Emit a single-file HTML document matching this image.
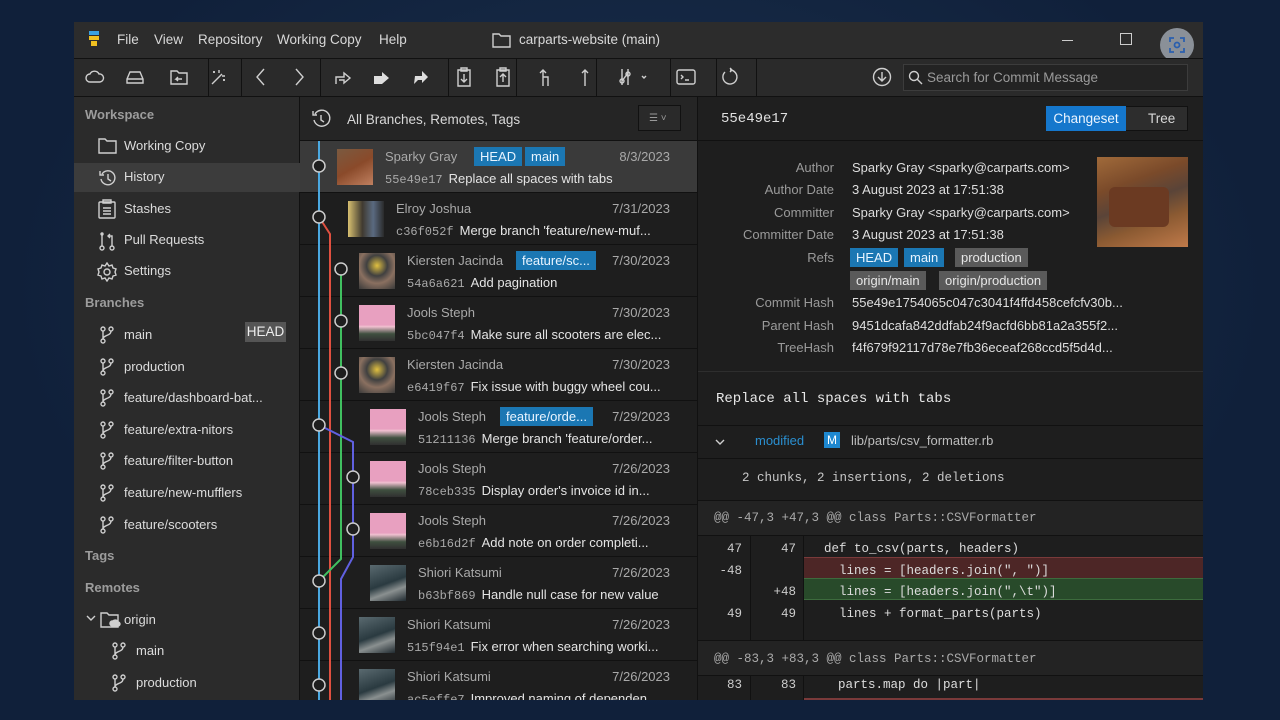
<!DOCTYPE html><html><head><meta charset="utf-8"><style>
*{margin:0;padding:0;box-sizing:border-box}
body{width:1280px;height:720px;overflow:hidden;background:radial-gradient(ellipse at 50% 40%,#1b3250,#10203a 70%);font-family:"Liberation Sans",sans-serif;color:#d8d8d8;font-size:13px;position:relative}
.a{position:absolute;white-space:nowrap}
.win{position:absolute;left:74px;top:22px;width:1129px;height:678px;background:#1e1e1e;overflow:hidden}
.mono{font-family:"Liberation Mono",monospace}
.tag{position:absolute;background:#1b77b3;color:#e8f4ff;padding:0 6px;height:19px;line-height:19px;font-size:13px}
.gtag{background:#5a5a5a;color:#e6e6e6}
.sep{position:absolute;background:#111;height:1px}
.row{position:absolute;left:226px;width:397px;height:52px;border-bottom:1px solid #111}
.av{position:absolute;width:36px;height:36px}
.nm{position:absolute;color:#a9a9a9;font-size:13px}
.dt{position:absolute;right:27px;color:#a9a9a9}
.msg{position:absolute;color:#e4e4e4}
.hs{color:#a9a9a9;font-family:"Liberation Mono",monospace;font-size:12px;margin-right:6px}
.lbl{position:absolute;right:369px;color:#9a9a9a;text-align:right}
.val{position:absolute;left:778px;color:#dedede}
.si{position:absolute;left:50px;color:#dcdcdc}
.sh{position:absolute;left:11px;color:#9c9c9c;font-weight:bold}
.ic{position:absolute;stroke:#cfcfcf;fill:none;stroke-width:1.4}
</style></head><body>
<div class="win">
<div class="a" style="left:0;top:0;width:1129px;height:36px;background:#2c2c2c"></div>
<div class="a" style="left:15px;top:9px;width:10px;height:4px;background:#3aa0e0"></div>
<div class="a" style="left:15px;top:14px;width:10px;height:4px;background:#f0c020"></div>
<div class="a" style="left:17px;top:19px;width:6px;height:5px;background:#f0c020"></div>
<div class="a" style="left:43px;top:10px;font-size:13.5px">File</div>
<div class="a" style="left:80px;top:10px;font-size:13.5px">View</div>
<div class="a" style="left:124px;top:10px;font-size:13.5px">Repository</div>
<div class="a" style="left:203px;top:10px;font-size:13.5px">Working Copy</div>
<div class="a" style="left:305px;top:10px;font-size:13.5px">Help</div>
<svg class="ic" style="left:418px;top:9px" width="20" height="18"><path d="M1 3h6l2 2h9v11H1z"/></svg>
<div class="a" style="left:445px;top:10px;font-size:13.5px">carparts-website (main)</div>
<div class="a" style="left:988px;top:18px;width:11px;height:1px;background:#ccc"></div>
<div class="a" style="left:1046px;top:11px;width:12px;height:12px;border:1px solid #ccc"></div>
<div class="a" style="left:1086px;top:6px;width:34px;height:34px;border-radius:17px;background:#8a9098"></div>
<svg class="a" style="left:1093px;top:13px" width="20" height="20" stroke="#2a5fae" fill="none" stroke-width="1.8"><path d="M3 7V3h4M13 3h4v4M17 13v4h-4M7 17H3v-4"/><circle cx="10" cy="10" r="2.5"/></svg>
<div class="a" style="left:0;top:36px;width:1129px;height:39px;background:#2a2a2a;border-top:1px solid #111;border-bottom:1px solid #111"></div>
<div class="a" style="left:134px;top:37px;width:1px;height:37px;background:#111"></div>
<div class="a" style="left:167px;top:37px;width:1px;height:37px;background:#111"></div>
<div class="a" style="left:246px;top:37px;width:1px;height:37px;background:#111"></div>
<div class="a" style="left:374px;top:37px;width:1px;height:37px;background:#111"></div>
<div class="a" style="left:442px;top:37px;width:1px;height:37px;background:#111"></div>
<div class="a" style="left:522px;top:37px;width:1px;height:37px;background:#111"></div>
<div class="a" style="left:596px;top:37px;width:1px;height:37px;background:#111"></div>
<div class="a" style="left:642px;top:37px;width:1px;height:37px;background:#111"></div>
<div class="a" style="left:682px;top:37px;width:1px;height:37px;background:#111"></div>
<svg class="ic" style="left:11px;top:47px" width="20" height="16"><path d="M5 13a4 4 0 0 1 0-8 5 5 0 0 1 9 0 4 4 0 0 1 1 8z"/></svg>
<svg class="ic" style="left:51px;top:47px" width="20" height="16"><path d="M2 10l3-7h10l3 7v4H2zM2 10h16"/></svg>
<svg class="ic" style="left:95px;top:46px" width="20" height="18"><path d="M2 3h6l2 2h8v11H2z M13 11H7l2-2M7 11l2 2"/></svg>
<svg class="ic" style="left:134px;top:46px" width="20" height="18"><path d="M4 16L14 6M11 2v3M14 8h3M6 3v2M5 4h2M16 11v2M15 12h2"/></svg>
<svg class="ic" style="left:180px;top:45px" width="14" height="20" stroke-width="1.8"><path d="M10 2L3 10l7 8"/></svg>
<svg class="ic" style="left:218px;top:45px" width="14" height="20" stroke-width="1.8" stroke="#999"><path d="M4 2l7 8-7 8"/></svg>
<svg class="ic" style="left:259px;top:46px" width="20" height="18"><path d="M3 16V9h8V5l6 5-6 5v-3H6"/></svg>
<svg class="a" style="left:298px;top:46px" width="20" height="18" fill="#ddd"><path d="M2 16V8h8V4l7 6-7 6"/></svg>
<svg class="a" style="left:337px;top:46px" width="20" height="18" fill="#ddd"><path d="M3 16l1-8h7V3l6 6-6 6v-3H7z"/></svg>
<svg class="ic" style="left:382px;top:45px" width="16" height="20"><path d="M2 3h12v16H2zM5 1h6v3H5zM8 7v8M5 12l3 3 3-3"/></svg>
<svg class="ic" style="left:421px;top:45px" width="16" height="20" stroke="#999"><path d="M2 3h12v16H2zM5 1h6v3H5zM8 15V7M5 10l3-3 3 3"/></svg>
<svg class="ic" style="left:464px;top:45px" width="14" height="20" stroke-width="1.8"><path d="M5 19V3M2 6l3-3 3 3M5 10h5v9"/></svg>
<svg class="ic" style="left:504px;top:45px" width="14" height="20" stroke-width="1.8"><path d="M7 19V3M4 6l3-3 3 3"/></svg>
<svg class="ic" style="left:544px;top:45px" width="30" height="20"><path d="M4 2v16M10 2v16M4 14l6-8"/><circle cx="4" cy="14" r="2"/><circle cx="10" cy="7" r="2"/><path d="M24 9l2 2 2-2"/></svg>
<svg class="ic" style="left:602px;top:46px" width="20" height="18"><rect x="1" y="2" width="18" height="14" rx="2"/><path d="M5 7l2 2-2 2M9 12h4"/></svg>
<svg class="ic" style="left:645px;top:45px" width="20" height="20" stroke-width="1.6"><path d="M6 5a7 7 0 1 0 5-2M11 1l2 2-2 2"/></svg>
<svg class="ic" style="left:798px;top:45px" width="20" height="20"><circle cx="10" cy="10" r="8.5"/><path d="M10 5v9M6 10l4 4 4-4"/></svg>
<div class="a" style="left:829px;top:42px;width:285px;height:27px;background:#232323;border:1px solid #3c3c3c"></div>
<svg class="ic" style="left:834px;top:48px" width="16" height="16" stroke="#aaa"><circle cx="6" cy="6" r="4.5"/><path d="M9 9l5 5"/></svg>
<div class="a" style="left:853px;top:48px;color:#9a9a9a;font-size:13.5px">Search for Commit Message</div>
<div class="a" style="left:0;top:75px;width:226px;height:603px;background:#2b2b2b;border-right:1px solid #111"></div>
<div class="a" style="left:0;top:141px;width:226px;height:29px;background:#3c3c3c"></div>
<div class="sh a" style="top:85px">Workspace</div>
<svg class="ic" style="left:24px;top:115px" width="20" height="18"><path d="M1 2h6l2 2h9v12H1z"/></svg><div class="si" style="top:116px">Working Copy</div>
<svg class="ic" style="left:24px;top:146px" width="20" height="20"><path d="M4 6a7 7 0 1 1-1 5M2 3v4h4M10 6v5l3 2"/></svg><div class="si" style="top:147px">History</div>
<svg class="ic" style="left:24px;top:177px" width="18" height="20"><rect x="1" y="3" width="16" height="16" rx="1"/><path d="M5 1h8v3H5zM5 9h8M5 12h8M5 15h8"/></svg><div class="si" style="top:179px">Stashes</div>
<svg class="ic" style="left:24px;top:209px" width="18" height="20"><circle cx="4" cy="17" r="2"/><circle cx="14" cy="17" r="2"/><path d="M4 2v13M14 15V5h-4M12 3l-2 2 2 2"/><circle cx="4" cy="3" r="1"/></svg><div class="si" style="top:210px">Pull Requests</div>
<svg class="ic" style="left:23px;top:240px" width="20" height="20"><circle cx="10" cy="10" r="3"/><path d="M10 1l2 3 3-1 1 3 3 1-1 3 1 3-3 1-1 3-3-1-2 3-2-3-3 1-1-3-3-1 1-3-1-3 3-1 1-3 3 1z"/></svg><div class="si" style="top:241px">Settings</div>
<div class="sh a" style="top:273px">Branches</div>
<div class="a" style="left:171px;top:300px;width:41px;height:20px;background:#555;color:#eee;text-align:center;line-height:20px;font-size:13.5px">HEAD</div>
<div id="br"></div>
<div class="sh a" style="top:526px">Tags</div>
<div class="sh a" style="top:558px">Remotes</div>
<svg class="ic" style="left:12px;top:592px" width="10" height="8"><path d="M1 2l4 4 4-4"/></svg>
<svg class="ic" style="left:26px;top:589px" width="22" height="18"><path d="M1 2h6l2 2h9v12H1z"/><path d="M12 15a2.5 2.5 0 0 1 1-5 3 3 0 0 1 5 1 2 2 0 0 1 0 4z" fill="#cfcfcf"/></svg>
<div class="si" style="top:590px">origin</div>
<div class="a" style="left:226px;top:75px;width:397px;height:44px;background:#252525;border-bottom:1px solid #111"></div>
<svg class="ic" style="left:236px;top:86px" width="22" height="22"><path d="M5 6a8 8 0 1 1-1 6M3 3v4h4M11 7v5l3 2"/></svg>
<div class="a" style="left:273px;top:90px;font-size:13.5px">All Branches, Remotes, Tags</div>
<div class="a" style="left:564px;top:83px;width:43px;height:26px;border:1px solid #111;background:#2a2a2a"></div>
<div class="a" style="left:575px;top:91px;color:#999;font-size:10px">☰ ˅</div>
<div class="a" style="left:623px;top:75px;width:1px;height:603px;background:#111"></div>
<div id="rows"></div>
<div class="a" style="left:624px;top:75px;width:505px;height:44px;background:#1f1f1f;border-bottom:1px solid #111"></div>
<div class="a mono" style="left:647px;top:89px;font-size:14px;color:#e0e0e0">55e49e17</div>
<div class="a" style="left:972px;top:84px;width:142px;height:25px;border:1px solid #111;background:#2d2d2d"></div>
<div class="a" style="left:972px;top:84px;width:80px;height:25px;background:#1577cc;color:#eaf4ff;text-align:center;line-height:25px;font-size:13.5px">Changeset</div>
<div class="a" style="left:1074px;top:89px;font-size:13.5px">Tree</div>
<div class="lbl a" style="top:138px">Author</div><div class="val" style="top:138px">Sparky Gray &lt;sparky@carparts.com&gt;</div>
<div class="lbl a" style="top:160px">Author Date</div><div class="val" style="top:160px">3 August 2023 at 17:51:38</div>
<div class="lbl a" style="top:183px">Committer</div><div class="val" style="top:183px">Sparky Gray &lt;sparky@carparts.com&gt;</div>
<div class="lbl a" style="top:205px">Committer Date</div><div class="val" style="top:205px">3 August 2023 at 17:51:38</div>
<div class="lbl a" style="top:228px">Refs</div>
<div class="tag" style="left:776px;top:226px">HEAD</div><div class="tag" style="left:830px;top:226px">main</div><div class="tag gtag" style="left:881px;top:226px">production</div>
<div class="tag gtag" style="left:776px;top:249px">origin/main</div><div class="tag gtag" style="left:865px;top:249px">origin/production</div>
<div class="lbl a" style="top:273px">Commit Hash</div><div class="val" style="top:273px">55e49e1754065c047c3041f4ffd458cefcfv30b...</div>
<div class="lbl a" style="top:296px">Parent Hash</div><div class="val" style="top:296px">9451dcafa842ddfab24f9acfd6bb81a2a355f2...</div>
<div class="lbl a" style="top:318px">TreeHash</div><div class="val" style="top:318px">f4f679f92117d78e7fb36eceaf268ccd5f5d4d...</div>
<div class="a" style="left:1023px;top:135px;width:91px;height:90px;background:linear-gradient(160deg,#a06a3a 0%,#7a4a2a 30%,#5a4438 50%,#8b5a32 70%,#c07a4a 100%)"></div>
<div class="a" style="left:1035px;top:165px;width:60px;height:40px;background:#6b3a22;border-radius:6px"></div>
<div class="sep" style="left:624px;top:349px;width:505px;background:#2e2e2e"></div>
<div class="a mono" style="left:642px;top:369px;font-size:14px;color:#e8e8e8">Replace all spaces with tabs</div>
<div class="sep" style="left:624px;top:403px;width:505px"></div>
<svg class="ic" style="left:641px;top:416px" width="10" height="8" stroke="#888"><path d="M1 2l4 4 4-4"/></svg>
<div class="a" style="left:681px;top:411px;color:#2a8fd0">modified</div>
<div class="a" style="left:750px;top:410px;width:16px;height:16px;background:#1e88d0;color:#fff;font-size:12px;text-align:center;line-height:16px">M</div>
<div class="a" style="left:777px;top:411px;color:#bdbdbd">lib/parts/csv_formatter.rb</div>
<div class="sep" style="left:624px;top:436px;width:505px"></div>
<div class="a mono" style="left:668px;top:449px;font-size:12.5px;color:#c8c8c8">2 chunks, 2 insertions, 2 deletions</div>
<div class="sep" style="left:624px;top:478px;width:505px"></div>
<div class="a" style="left:624px;top:479px;width:505px;height:34px;background:#232323"></div>
<div class="a mono" style="left:640px;top:489px;font-size:12.5px;color:#aaa">@@ -47,3 +47,3 @@ class Parts::CSVFormatter</div>
<div class="sep" style="left:624px;top:513px;width:505px"></div>
<div class="a" style="left:676px;top:514px;width:1px;height:104px;background:#111"></div>
<div class="a" style="left:729px;top:514px;width:1px;height:104px;background:#111"></div>
<div class="a" style="left:730px;top:535px;width:399px;height:21px;background:#4d2626;border-top:1px solid #7a3a3a"></div>
<div class="a" style="left:730px;top:556px;width:399px;height:22px;background:#284a2a;border-top:1px solid #3d6b3d;border-bottom:1px solid #3d6b3d"></div>
<div class="a mono" style="left:624px;top:517px;width:44px;text-align:right;font-size:12.5px;line-height:21.5px;color:#ccc">47<br>-48<br>&nbsp;<br>49</div>
<div class="a mono" style="left:676px;top:517px;width:46px;text-align:right;font-size:12.5px;line-height:21.5px;color:#ccc">47<br>&nbsp;<br>+48<br>49</div>
<div class="a mono" style="left:750px;top:517px;font-size:12.5px;line-height:21.5px;color:#ddd;white-space:pre">def to_csv(parts, headers)
  lines = [headers.join(", ")]
  lines = [headers.join(",\t")]
  lines + format_parts(parts)</div>
<div class="sep" style="left:624px;top:618px;width:505px"></div>
<div class="a" style="left:624px;top:619px;width:505px;height:34px;background:#232323"></div>
<div class="a mono" style="left:640px;top:630px;font-size:12.5px;color:#aaa">@@ -83,3 +83,3 @@ class Parts::CSVFormatter</div>
<div class="sep" style="left:624px;top:653px;width:505px"></div>
<div class="a" style="left:676px;top:654px;width:1px;height:24px;background:#111"></div>
<div class="a" style="left:729px;top:654px;width:1px;height:24px;background:#111"></div>
<div class="a mono" style="left:624px;top:656px;width:44px;text-align:right;font-size:12.5px;color:#ccc">83</div>
<div class="a mono" style="left:676px;top:656px;width:46px;text-align:right;font-size:12.5px;color:#ccc">83</div>
<div class="a mono" style="left:764px;top:656px;font-size:12.5px;color:#ddd">parts.map do |part|</div>
<div class="a" style="left:730px;top:676px;width:399px;height:2px;background:#7a3a3a"></div>
</div>
<script>
var br=["main","production","feature/dashboard-bat...","feature/extra-nitors","feature/filter-button","feature/new-mufflers","feature/scooters"],h="";
var bic=function(x,y){return '<svg class="ic" style="left:'+x+'px;top:'+y+'px" width="16" height="20"><circle cx="4" cy="4" r="2"/><circle cx="12" cy="4" r="2"/><circle cx="4" cy="16" r="2"/><path d="M4 6v8M12 6c0 5-8 4-8 8"/></svg>';};
br.forEach(function(b,i){var y=303+i*31.6;h+=bic(25,y)+'<div class="si" style="top:'+(y+2)+'px">'+b+'</div>';});
[["main",619],["production",651]].forEach(function(b){h+=bic(37,b[1])+'<div class="si" style="left:62px;top:'+(b[1]+2)+'px">'+b[0]+'</div>';});
document.getElementById("br").outerHTML=h;
var R=[["Sparky Gray","8/3/2023","55e49e17","Replace all spaces with tabs",337,[["HEAD",89],["main",140]],"c"],
["Elroy Joshua","7/31/2023","c36f052f","Merge branch 'feature/new-muf...",348,[],"e"],
["Kiersten Jacinda","7/30/2023","54a6a621","Add pagination",359,[["feature/sc...",109]],"k"],
["Jools Steph","7/30/2023","5bc047f4","Make sure all scooters are elec...",359,[],"j"],
["Kiersten Jacinda","7/30/2023","e6419f67","Fix issue with buggy wheel cou...",359,[],"k"],
["Jools Steph","7/29/2023","51211136","Merge branch 'feature/order...",370,[["feature/orde...",82]],"j"],
["Jools Steph","7/26/2023","78ceb335","Display order's invoice id in...",370,[],"j"],
["Jools Steph","7/26/2023","e6b16d2f","Add note on order completi...",370,[],"j"],
["Shiori Katsumi","7/26/2023","b63bf869","Handle null case for new value",370,[],"s"],
["Shiori Katsumi","7/26/2023","515f94e1","Fix error when searching worki...",359,[],"s"],
["Shiori Katsumi","7/26/2023","ac5effe7","Improved naming of dependen...",359,[],"s"]];
var G={c:"linear-gradient(150deg,#7a5a40,#8a4a2a 50%,#c08060)",e:"linear-gradient(90deg,#d8c070,#403a30 40%,#5a6a80 70%,#2a2a2a)",k:"radial-gradient(circle at 50% 35%,#e0c040 0,#404040 35%,#8a7060 60%,#3a3a3a)",j:"linear-gradient(180deg,#e8a0c0 0,#e8a0c0 55%,#f0c0d0 60%,#405040 80%,#303030)",s:"linear-gradient(160deg,#5a6a70,#2a3a40 50%,#8a9090 70%,#202a30)"};
var s="";
R.forEach(function(r,i){var top=119+i*52,ax=r[4]-74-226;
s+='<div class="row" style="top:'+top+'px;'+(i==0?'background:#3a3a3a':'')+'">';
s+='<div class="av" style="left:'+ax+'px;top:8px;background:'+G[r[6]]+'"></div>';
s+='<div class="nm" style="left:'+(ax+48)+'px;top:8px">'+r[0]+'</div>';
r[5].forEach(function(t){s+='<div class="tag" style="left:'+(ax+48+t[1])+'px;top:6px">'+t[0]+'</div>';});
s+='<div class="dt" style="top:8px">'+r[1]+'</div>';
s+='<div class="msg" style="left:'+(ax+48)+'px;top:30px"><span class="hs">'+r[2]+'</span>'+r[3]+'</div></div>';});
var svg='<svg class="a" style="left:226px;top:119px" width="80" height="560" fill="none" stroke-width="2">';
svg+='<path d="M19 0V560" stroke="#4aa8e0"/>';
svg+='<path d="M19 76L30 93V560" stroke="#e05040"/>';
svg+='<path d="M41 128V418L19 440" stroke="#40c060"/>';
svg+='<path d="M19 284L53 301V416L41 438V560" stroke="#6060e0"/>';
[[19,25],[19,76],[41,128],[41,180],[41,232],[19,284],[53,336],[53,388],[19,440],[19,492],[19,544]].forEach(function(p){svg+='<circle cx="'+p[0]+'" cy="'+p[1]+'" r="6" fill="#1e1e1e" stroke="#ccc" stroke-width="1.5"/>';});
svg+='</svg>';
document.getElementById("rows").outerHTML=s+svg;
</script>
</body></html>
